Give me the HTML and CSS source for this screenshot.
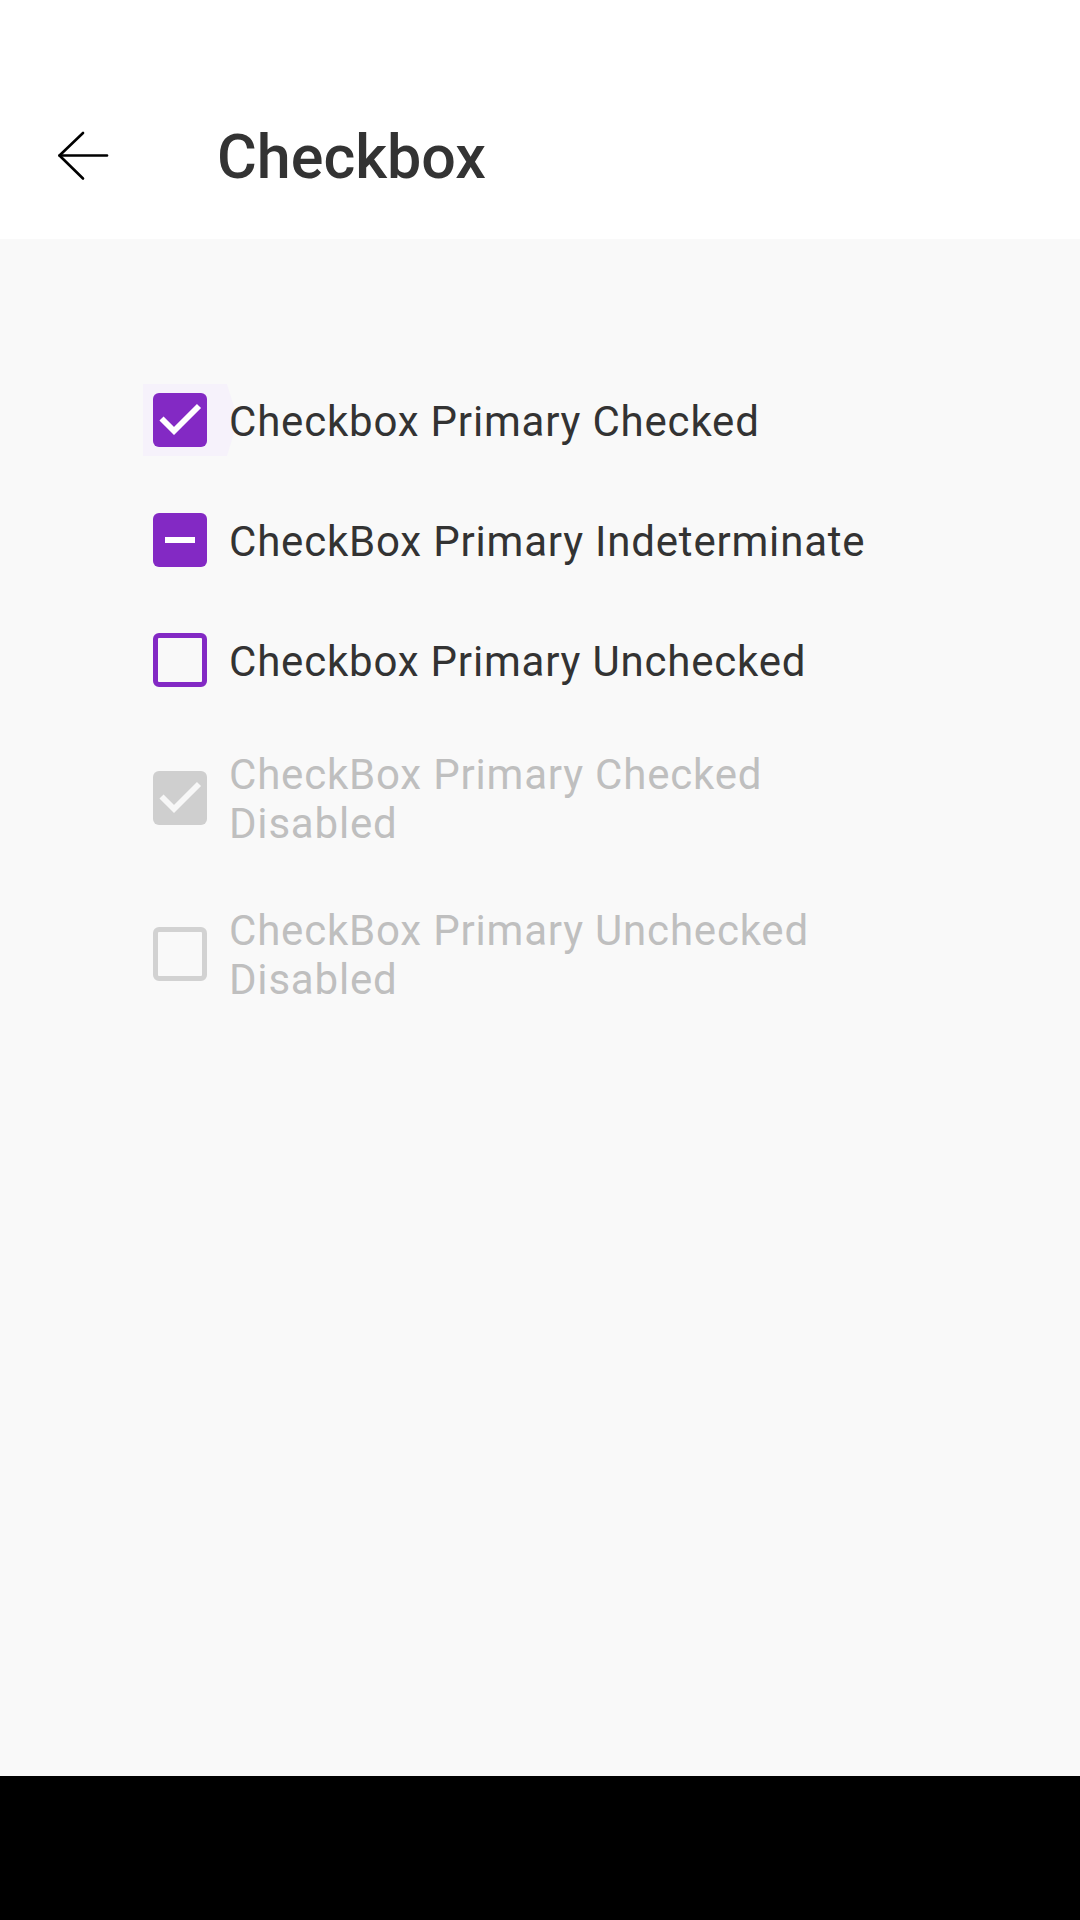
FILE: index.html
```html
<!DOCTYPE html>
<html lang="en">
<head>
<meta charset="utf-8">
<title>Checkbox</title>
<link rel="stylesheet" href="styles.css">
</head>
<body>
<div class="screen">
  <header class="appbar">
    <div class="toolbar">
      <button class="back" aria-label="Back">
        <svg width="50" height="48" viewBox="0 0 50 48" fill="none" stroke="#000" stroke-width="2.6" stroke-linecap="round" stroke-linejoin="round">
          <path d="M1.5 23.5H49"/>
          <path d="M25 1L1.5 23.5L25 46.5"/>
        </svg>
      </button>
      <h1 class="title">Checkbox</h1>
    </div>
  </header>

  <main class="content">
    <div class="row">
      <div class="touch">
        <span class="ripple"></span>
        <span class="box filled">
          <svg width="54" height="54" viewBox="0 0 54 54"><path d="M8.5 25.5L21 38L46 13" fill="none" stroke="#fff" stroke-width="5.8"/></svg>
        </span>
      </div>
      <span class="label">Checkbox Primary Checked</span>
    </div>

    <div class="row">
      <div class="touch">
        <span class="box filled">
          <span class="dash"></span>
        </span>
      </div>
      <span class="label">CheckBox Primary Indeterminate</span>
    </div>

    <div class="row">
      <div class="touch">
        <span class="box outline"></span>
      </div>
      <span class="label">Checkbox Primary Unchecked</span>
    </div>

    <div class="row disabled">
      <div class="touch">
        <span class="box filled">
          <svg width="54" height="54" viewBox="0 0 54 54"><path d="M8.5 25.5L21 38L46 13" fill="none" stroke="#f7f7f7" stroke-width="5.8"/></svg>
        </span>
      </div>
      <span class="label">CheckBox Primary Checked Disabled</span>
    </div>

    <div class="row disabled">
      <div class="touch">
        <span class="box outline"></span>
      </div>
      <span class="label">CheckBox Primary Unchecked Disabled</span>
    </div>
  </main>

  <footer class="navbar"></footer>
</div>
</body>
</html>
```

FILE: styles.css
```css
* {
  box-sizing: border-box;
}

html, body {
  margin: 0;
  padding: 0;
}

body {
  font-family: Roboto, "Noto Sans", "Liberation Sans", sans-serif;
  background: #f9f9f9;
}

.screen {
  width: 1080px;
  height: 1920px;
  display: flex;
  flex-direction: column;
  background: #f9f9f9;
}

.appbar {
  background: #ffffff;
  height: 239px;
  padding-top: 72px;
  flex: none;
}

.toolbar {
  height: 167px;
  display: flex;
  align-items: center;
}

.back {
  margin-left: 58px;
  width: 50px;
  height: 48px;
  padding: 0;
  border: 0;
  background: transparent;
  display: flex;
  align-items: center;
  justify-content: center;
}

.back svg {
  display: block;
  overflow: visible;
}

.title {
  margin: 0 0 0 109px;
  padding-top: 4px;
  font-size: 61px;
  font-weight: 500;
  color: #333333;
  line-height: 1;
  letter-spacing: 0;
}

.content {
  flex: 1;
  padding: 145px 153px 0 144px;
  display: flex;
  flex-direction: column;
  gap: 48px;
}

.row {
  display: flex;
  align-items: center;
  min-height: 72px;
  gap: 13px;
}

.touch {
  position: relative;
  width: 72px;
  height: 72px;
  flex: none;
  display: flex;
  align-items: center;
  justify-content: center;
}

.ripple {
  position: absolute;
  left: -1px;
  top: 0;
  width: 95px;
  height: 72px;
  background: #f6f2fb;
  clip-path: polygon(0 0, 84px 0, 95px 36px, 84px 72px, 0 72px);
}

.box {
  position: relative;
  width: 54px;
  height: 54px;
  border-radius: 6px;
  display: flex;
  align-items: center;
  justify-content: center;
}

.box svg {
  position: absolute;
  left: 0;
  top: 0;
}

.box.filled {
  background: #8329c4;
}

.box.outline {
  border: 5px solid #8329c4;
  background: transparent;
}

.dash {
  width: 30px;
  height: 6px;
  background: #ffffff;
}

.label {
  position: relative;
  font-size: 42px;
  line-height: 49px;
  padding: 6px 0 4px;
  color: #333333;
  letter-spacing: 0.8px;
}

.disabled .box.filled {
  background: #cfcfcf;
}

.disabled .box.outline {
  border-color: #d2d2d2;
}

.disabled .label {
  color: #bfbfbf;
}

.navbar {
  flex: none;
  height: 144px;
  background: #000000;
}
```
